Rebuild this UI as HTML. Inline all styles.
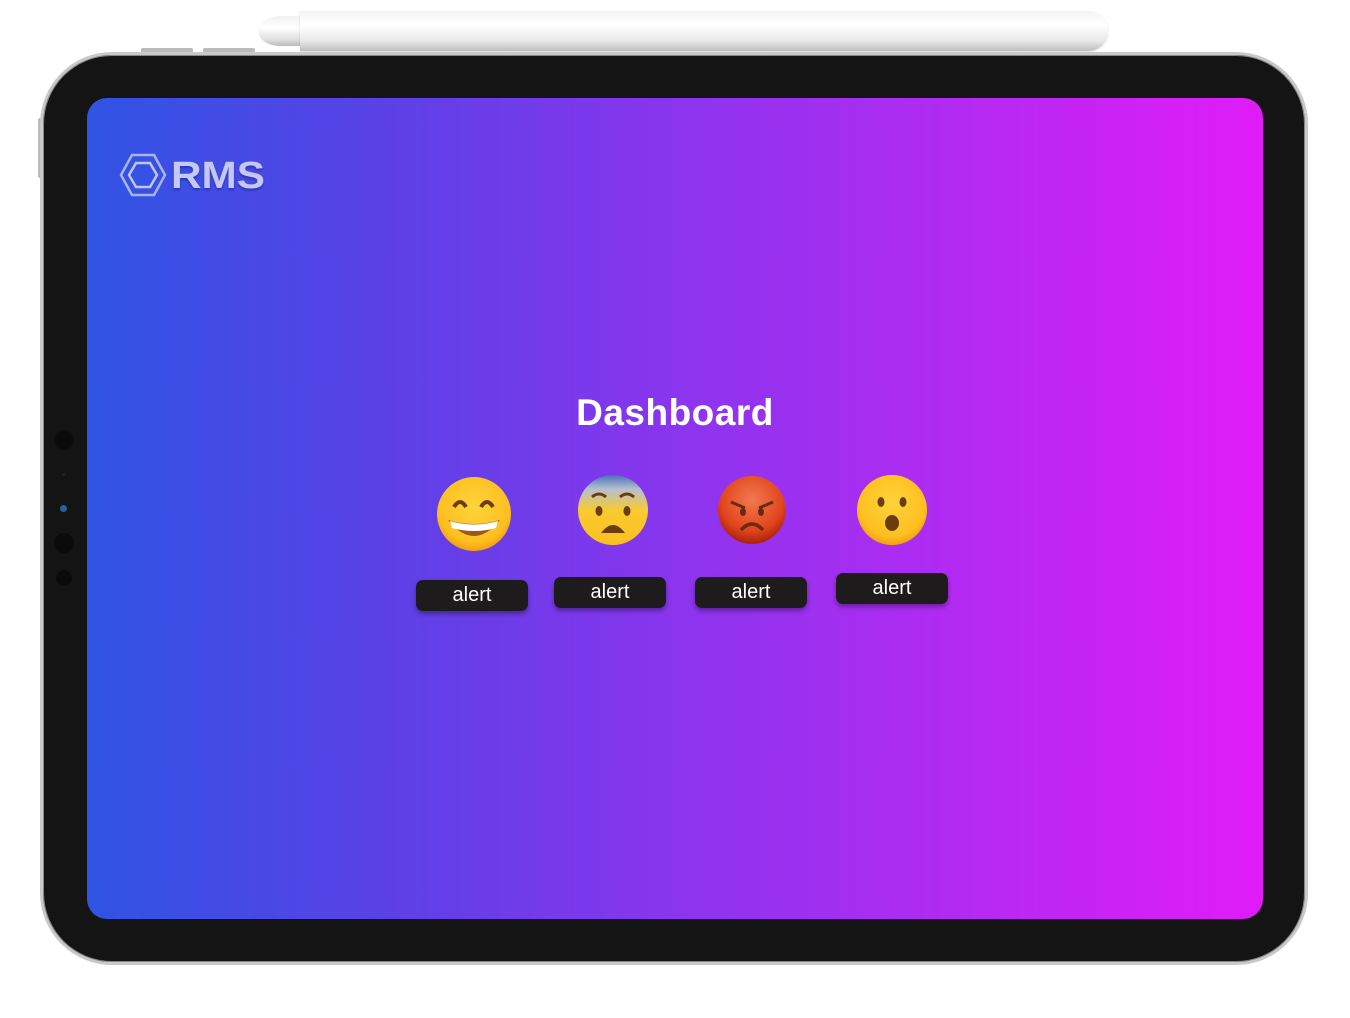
<!DOCTYPE html>
<html><head><meta charset="utf-8"><style>
html,body{margin:0;padding:0;width:1350px;height:1018px;background:#fff;overflow:hidden;position:relative;font-family:"Liberation Sans",sans-serif}
.pencil{position:absolute;left:300px;top:11px;width:808px;height:40px;border-radius:0 20px 20px 0;background:linear-gradient(#f4f4f4,#fff 35%,#e8e8e8 75%,#bdbdbd);box-shadow:0 1px 2px rgba(0,0,0,.15)}
.tip{position:absolute;left:258px;top:16px;width:44px;height:30px;border-radius:50% 0 0 50%/50% 0 0 50%;background:linear-gradient(#f2f2f2,#fff 40%,#ddd 80%,#bbb)}
.btn-top{position:absolute;top:48px;height:5px;background:#bbb;border-radius:2px}
.side{position:absolute;left:38px;top:118px;width:4px;height:60px;background:#bbb;border-radius:2px}
.dev{position:absolute;left:40px;top:52px;width:1268px;height:913px;box-sizing:border-box;border-radius:72px;background:#141414;border:3px solid #c9c9c9;box-shadow:inset 0 0 0 1px #888}
.screen{position:absolute;left:87px;top:98px;width:1176px;height:821px;border-radius:20px;background:linear-gradient(90deg,#2f54e4 0%,#5a41e6 25%,#8a35ee 50%,#b52af2 75%,#e01cf8 100%)}
.cam{position:absolute;left:54px;border-radius:50%;background:#0b0b0b}
h1{position:absolute;left:0;width:1350px;top:392px;margin:0;text-align:center;color:#fff;font-size:37px;font-weight:bold;letter-spacing:0.5px}
.b{position:absolute;width:112px;height:31px;background:#1e1b1d;border-radius:7px;color:#fff;font-size:20px;text-align:center;line-height:31px;box-shadow:0 3px 5px rgba(0,0,0,.35)}
.logo{position:absolute;left:118px;top:152px}
</style></head><body>
<div class="btn-top" style="left:141px;width:52px"></div>
<div class="btn-top" style="left:203px;width:52px"></div>
<div class="side"></div>
<div class="tip"></div><div class="pencil"></div>
<div class="dev"></div>
<div class="cam" style="top:430px;width:20px;height:20px"></div>
<div class="cam" style="top:473px;left:62px;width:3px;height:3px;background:#222"></div>
<div class="cam" style="top:505px;left:60px;width:7px;height:7px;background:#2a5ea8"></div>
<div class="cam" style="top:533px;width:20px;height:20px"></div>
<div class="cam" style="top:570px;left:56px;width:16px;height:16px"></div>
<div class="screen"></div>
<svg class="logo" width="160" height="50" viewBox="0 0 160 50">
<polygon points="14,3 36,3 47,23 36,43 14,43 3,23" fill="none" stroke="#a9b4f4" stroke-width="2.5"/>
<polygon points="18,11 32,11 39,23 32,35 18,35 11,23" fill="none" stroke="#c0c6f6" stroke-width="2.5"/>
<text x="53" y="36" font-family="Liberation Sans" font-weight="bold" font-size="38" fill="#c3c8f7" textLength="94" lengthAdjust="spacingAndGlyphs" style="filter:drop-shadow(0 2px 1px rgba(0,0,60,.3))">RMS</text>
</svg>
<h1>Dashboard</h1>
<svg style="position:absolute;left:0;top:0" width="1350" height="1018">
<defs>
<radialGradient id="y" cx="50%" cy="40%" r="60%"><stop offset="0" stop-color="#ffd43a"/><stop offset=".8" stop-color="#fdbf20"/><stop offset="1" stop-color="#f3a010"/></radialGradient>
<linearGradient id="f" x1="0" y1="0" x2="0" y2="1"><stop offset="0" stop-color="#4a70b8"/><stop offset=".2" stop-color="#b5bfd0"/><stop offset=".5" stop-color="#f8cb30"/><stop offset="1" stop-color="#fdbf20"/></linearGradient>
<radialGradient id="r" cx="50%" cy="35%" r="65%"><stop offset="0" stop-color="#f07a50"/><stop offset=".7" stop-color="#e2451d"/><stop offset="1" stop-color="#a8200c"/></radialGradient>
</defs>
<circle cx="474" cy="514" r="37" fill="url(#y)"/>
<path d="M454 507 q6-10 12 0 M481 507 q6-10 12 0" stroke="#6b3c0c" stroke-width="4" fill="none"/>
<path d="M448 520 Q474 552 500 520 Q474 528 448 520Z" fill="#9a5a14"/><path d="M450 521 Q474 528 498 521 L496 528 Q474 534 452 528Z" fill="#fff"/>
<circle cx="613" cy="510" r="35" fill="url(#f)"/>
<path d="M592 497 q7-6 14 0 M620 497 q7-6 14 0" stroke="#6b3c0c" stroke-width="3" fill="none"/>
<ellipse cx="599" cy="511" rx="3.5" ry="5" fill="#6b3c0c"/><ellipse cx="627" cy="511" rx="3.5" ry="5" fill="#6b3c0c"/>
<path d="M601 533 q12-16 24 0Z" fill="#6b3c0c"/>
<circle cx="752" cy="510" r="34" fill="url(#r)"/>
<path d="M731 502 l14 6 M773 502 l-14 6" stroke="#6b2a0c" stroke-width="3"/>
<ellipse cx="743" cy="512" rx="3" ry="4" fill="#6b2a0c"/><ellipse cx="761" cy="512" rx="3" ry="4" fill="#6b2a0c"/>
<path d="M741 530 q11-12 22 0" stroke="#6b2a0c" stroke-width="3.5" fill="none"/>
<circle cx="892" cy="510" r="35" fill="url(#y)"/>
<ellipse cx="881" cy="502" rx="3.5" ry="5" fill="#6b3c0c"/><ellipse cx="903" cy="502" rx="3.5" ry="5" fill="#6b3c0c"/>
<ellipse cx="892" cy="523" rx="7" ry="8" fill="#6b3c0c"/>
</svg>
<div class="b" style="left:416px;top:580px">alert</div>
<div class="b" style="left:554px;top:577px">alert</div>
<div class="b" style="left:695px;top:577px">alert</div>
<div class="b" style="left:836px;top:573px">alert</div>
</body></html>
